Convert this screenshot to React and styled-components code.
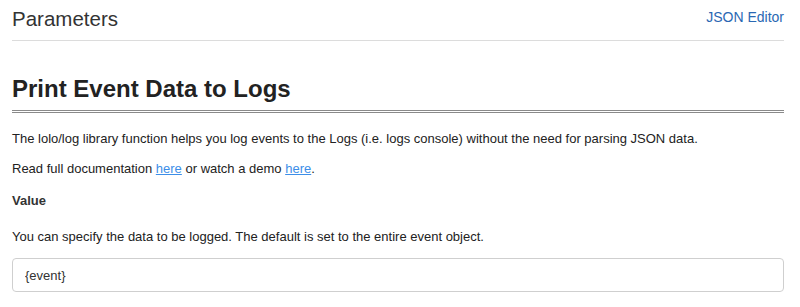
import React from 'react';
import styled, { createGlobalStyle } from 'styled-components';

const GlobalStyle = createGlobalStyle`
body {
  margin: 0;
  background: #fff;
  font-family: "Liberation Sans", Arial, Helvetica, sans-serif;
  color: #333;
}
`;

const Page = styled.div`
padding: 0 16px 0 12px;
`;

const Header = styled.div`
display: flex;
justify-content: space-between;
align-items: flex-start;
height: 41px;
box-sizing: border-box;
border-bottom: 1px solid #dcdcdc;
`;

const PanelTitle = styled.h2`
margin: 0;
padding-top: 7px;
font-size: 20.5px;
line-height: 24px;
font-weight: 400;
color: #333;
`;

const EditorLink = styled.a`
padding-top: 7px;
font-size: 14px;
line-height: 20px;
color: #2a68b3;
text-decoration: none;
cursor: pointer;
`;

const Title = styled.h1`
margin: 34px 0 0;
padding-bottom: 7px;
font-size: 24px;
line-height: 28px;
font-weight: 700;
color: #222;
border-bottom: 3px double #8a8a8a;
`;

const Text = styled.p`
margin: ${(p) => p.$top || 0}px 0 0;
font-size: 13px;
line-height: 20px;
color: #222;
`;

const Label = styled.div`
margin-top: 12px;
font-size: 13px;
line-height: 20px;
font-weight: 700;
color: #333;
`;

const DocLink = styled.a`
color: #3d8ee8;
text-decoration: underline;
cursor: pointer;
`;

const ValueInput = styled.input`
display: block;
margin-top: 11px;
width: 100%;
height: 34px;
box-sizing: border-box;
padding: 6px 12px;
border: 1px solid #cfcfcf;
border-radius: 4px;
font-family: "Liberation Sans", Arial, sans-serif;
font-size: 13px;
color: #333;
background: #fff;
outline: none;
`;

export default function App() {
  return (
    <Page>
      <GlobalStyle />
      <Header>
        <PanelTitle>Parameters</PanelTitle>
        <EditorLink>JSON Editor</EditorLink>
      </Header>
      <Title>Print Event Data to Logs</Title>
      <Text $top={16}>
        The lolo/log library function helps you log events to the Logs (i.e. logs console) without the need for parsing JSON data.
      </Text>
      <Text $top={10}>
        Read full documentation <DocLink>here</DocLink> or watch a demo <DocLink>here</DocLink>.
      </Text>
      <Label>Value</Label>
      <Text $top={16}>
        You can specify the data to be logged. The default is set to the entire event object.
      </Text>
      <ValueInput defaultValue="{event}" />
    </Page>
  );
}
